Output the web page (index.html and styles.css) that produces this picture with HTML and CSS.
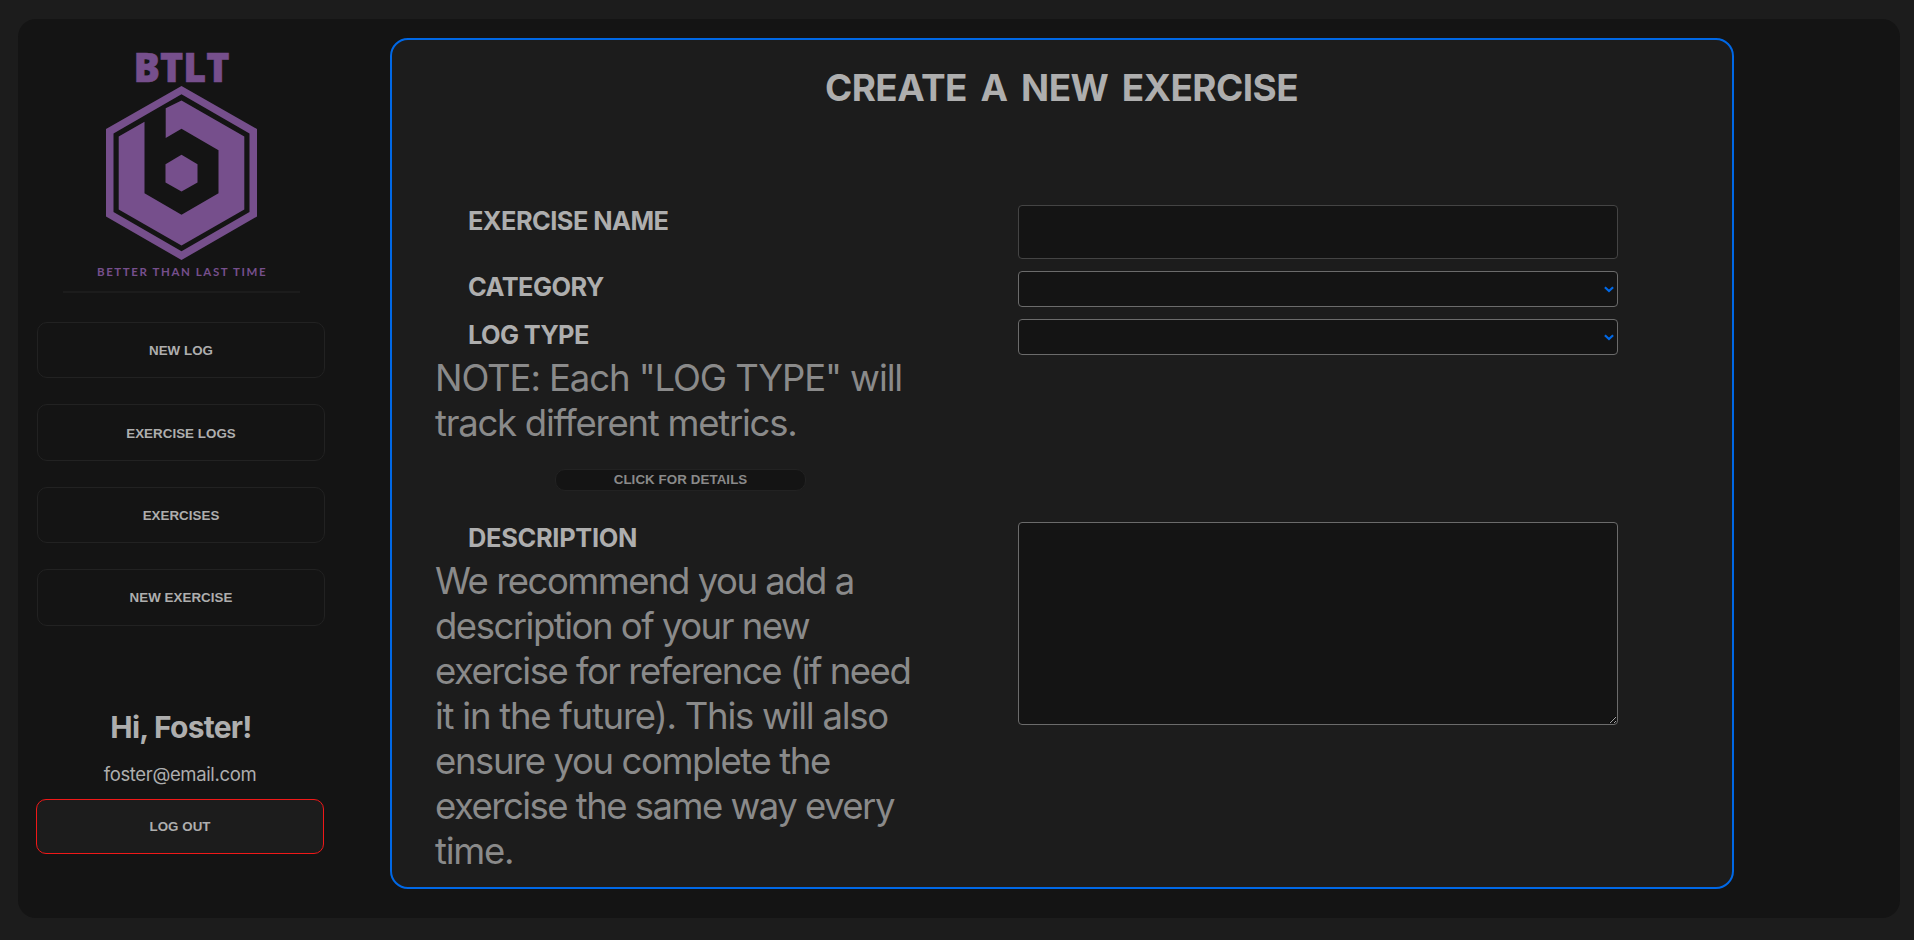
FILE: index.html
```html
<!DOCTYPE html>
<html lang="en">
<head>
<meta charset="utf-8">
<title>BTLT - Create a new exercise</title>
<link rel="stylesheet" href="styles.css">
</head>
<body>
<div class="shell">
  <aside class="sidebar">
    <svg class="logo" width="288" height="256" viewBox="37 34 288 256" role="img" aria-label="BTLT">
      <text class="logo-name" x="133.5" y="81.5" textLength="96" lengthAdjust="spacingAndGlyphs">BTLT</text>
      <path fill-rule="evenodd" d="M181.500 86 257 129v87.500L181.500 260 106 216.500V129ZM181.500 94.300 113.500 133.500v78.500l68 39.300 68-39.300v-78.500Z"/>
      <path d="M181.500 100.500 244.300 136.500v73l-62.800 36-62.800-36v-73l25.800-14.800v71.600l37 21.500 37-21.500v-43l-37-21.500-15.800 9.200v-29.800Z"/>
      <path d="m181.500 154.800 16 9.400v18.300l-16 9-16-9v-18.300Z"/>
      <text class="logo-tag" x="97" y="276" textLength="168.500">BETTER THAN LAST TIME</text>
    </svg>
    <hr class="rule">
    <nav class="nav">
      <button class="btn">NEW LOG</button>
      <button class="btn">EXERCISE LOGS</button>
      <button class="btn">EXERCISES</button>
      <button class="btn">NEW EXERCISE</button>
    </nav>
    <div class="user">
      <h2 class="hello">Hi, Foster!</h2>
      <div class="email">foster@email.com</div>
      <button class="btn logout">LOG OUT</button>
    </div>
  </aside>
  <main class="panel">
    <h1 class="title">CREATE A NEW EXERCISE</h1>
    <form class="form">
      <div class="row row-name">
        <label class="label">EXERCISE NAME</label>
        <input class="field name-field" type="text">
      </div>
      <div class="row row-select">
        <label class="label">CATEGORY</label>
        <div class="field select"><svg class="chev" width="10" height="7" viewBox="0 0 10 7"><path d="M.900 1.200 5 5.100 9.100 1.200"/></svg></div>
      </div>
      <div class="row row-type">
        <div>
          <label class="label label-type">LOG TYPE</label>
          <p class="note"><span class="ls-a">NOTE: Each "LOG TYPE" will</span> <span class="ls-b">track different metrics.</span></p>
          <button class="details" type="button">CLICK FOR DETAILS</button>
        </div>
        <div class="field select"><svg class="chev" width="10" height="7" viewBox="0 0 10 7"><path d="M.900 1.200 5 5.100 9.100 1.200"/></svg></div>
      </div>
      <div class="row row-desc">
        <div>
          <label class="label label-desc">DESCRIPTION</label>
          <p class="note"><span class="ls-d">We recommend you add a</span> <span class="ls-d">description of your new</span> <span class="ls-d">exercise for reference (if need</span> <span class="ls-b">it in the future). This will also</span> <span class="ls-c">ensure you complete the</span> <span class="ls-e">exercise the same way every</span> <span class="ls-b">time.</span></p>
        </div>
        <textarea class="field area"></textarea>
      </div>
    </form>
  </main>
</div>
</body>
</html>
```

FILE: styles.css
```css
* { box-sizing: border-box; }

body {
  margin: 0;
  height: 940px;
  padding: 19px 14px 22px 18px;
  background: #1c1c1c;
  color: #aeaeae;
  font-family: Inter, "Liberation Sans", sans-serif;
  overflow: hidden;
}

.shell {
  display: flex;
  height: 899px;
  border-radius: 18px;
  background: #141414;
}

.sidebar {
  display: flex;
  flex-direction: column;
  flex: none;
  width: 372px;
  padding: 15px 65px 0 19px;
}

.logo { display: block; flex: none; fill: #764f8c; }
.logo-name {
  font: 800 40px "Open Sans", sans-serif;
  stroke: #764f8c;
  stroke-width: 0.6;
}
.logo-tag { font: 700 11.5px Lato, sans-serif; }

.rule {
  width: 237px;
  height: 2px;
  margin: 1px auto 0 26px;
  border: 0;
  background: #1c1c1c;
}

.nav {
  display: flex;
  flex-direction: column;
  gap: 26px;
  margin-top: 29px;
}

.btn {
  display: block;
  width: 288px;
  height: 56.400px;
  padding: 1px 0 0;
  border: 1px solid #222;
  border-radius: 10px;
  background: #141414;
  color: #aeaeae;
  font: bold 13.330px "Liberation Sans", Arial, sans-serif;
  letter-spacing: 0.050px;
  text-align: center;
}

.user { margin-top: 83.400px; text-align: center; }
.hello {
  margin: 0;
  font-size: 30px;
  font-weight: 700;
  line-height: 36px;
  letter-spacing: -0.750px;
}
.email {
  margin: 17px 2px 0 0;
  font-size: 18.500px;
  line-height: 24px;
  letter-spacing: -0.350px;
}
.logout {
  height: 55px;
  margin: 13px 0 0 -1px;
  padding: 0;
  border-color: #f01818;
  background: #1c1c1c;
}

.panel {
  width: 1344px;
  height: 851px;
  margin-top: 19px;
  border: 2px solid #0068e6;
  border-radius: 18px;
  background: #1c1c1c;
}

.title {
  margin: 25px 1px 0 0;
  font-size: 36.900px;
  font-weight: 700;
  line-height: 46px;
  text-align: center;
  letter-spacing: -0.520px;
  word-spacing: 5.300px;
}

.form {
  display: flex;
  flex-direction: column;
  gap: 12px;
  margin: 94px 114px 0 43px;
}
.row {
  display: grid;
  grid-template-columns: 583px 600px;
  align-items: start;
}
.row-type { height: 191px; }

.label {
  display: block;
  padding-left: 33px;
  font-size: 25.400px;
  font-weight: 700;
  line-height: 31px;
  letter-spacing: -0.560px;
}
.label-type { letter-spacing: -0.650px; }
.label-desc { letter-spacing: -0.300px; }

.note {
  margin: 6px 0 0;
  color: #8a8a8a;
  font-size: 36.500px;
  line-height: 45px;
  white-space: nowrap;
}
.note span { display: block; }
.ls-a { letter-spacing: -1.100px; }
.ls-b { letter-spacing: -1.250px; }
.ls-c { letter-spacing: -1.400px; }
.ls-d { letter-spacing: -1.500px; }
.ls-e { letter-spacing: -1.520px; }

.details {
  display: block;
  width: 251px;
  height: 22px;
  margin: 23px 0 0 120px;
  padding: 0 0 2px;
  border: 1px solid #222;
  border-radius: 10px;
  background: #141414;
  color: #8a8a8a;
  font: bold 13.330px "Liberation Sans", Arial, sans-serif;
  letter-spacing: 0.080px;
}

.field {
  display: block;
  width: 600px;
  margin: 0;
  border: 1px solid #6b6b6b;
  border-radius: 4px;
  background: #141414;
  color: #aeaeae;
}
.name-field { height: 54px; border-color: #444; }
.select {
  display: flex;
  align-items: center;
  justify-content: flex-end;
  height: 36px;
  padding-right: 3px;
}
.chev { fill: none; stroke: #0068e6; stroke-width: 2.2; }
.area { height: 203px; }
```
